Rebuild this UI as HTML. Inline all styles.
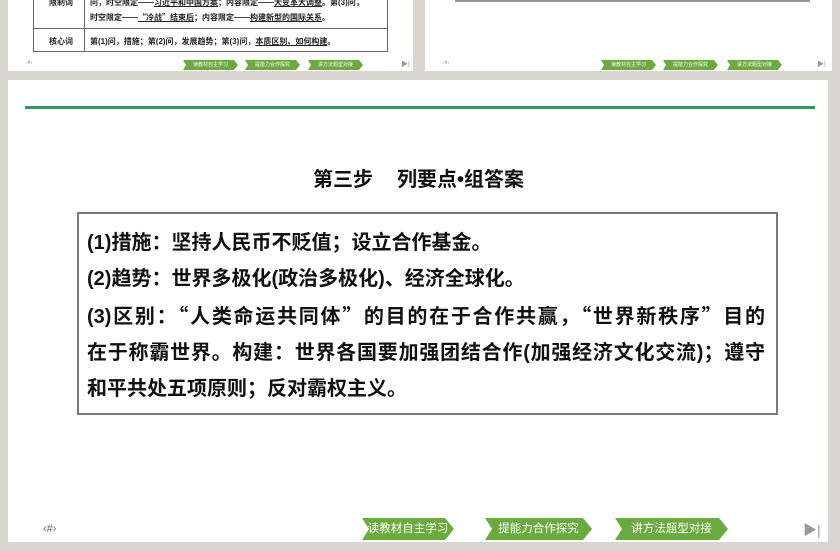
<!DOCTYPE html>
<html><head><meta charset="utf-8"><style>
*{margin:0;padding:0;box-sizing:border-box}
body{width:840px;height:551px;background:#d9d6d1;position:relative;overflow:hidden;font-family:"Liberation Sans","Noto Sans CJK SC",sans-serif}
.p{position:absolute;background:#fff}
.ab{position:absolute}
.btn{position:absolute;height:22px;background:#6aaa3e;color:#fff;font-size:11.5px;line-height:22px;text-align:center;padding-left:0;clip-path:polygon(0 0,calc(100% - 9px) 0,100% 50%,calc(100% - 9px) 100%,0 100%,7px 50%)}
.sbtn{position:absolute;height:10px;background:#6aaa3e;color:#fff;font-size:5px;line-height:10px;text-align:center;clip-path:polygon(0 0,calc(100% - 4px) 0,100% 50%,calc(100% - 4px) 100%,0 100%,3px 50%)}
.l{position:absolute;left:87px;font-size:20px;font-weight:bold;color:#111;white-space:nowrap;line-height:24px}
.j{width:678px;text-align:justify;text-align-last:justify;white-space:normal}
.q{font-family:"Noto Sans CJK SC",sans-serif}
.t{font-size:8px;color:#222;font-weight:bold;white-space:nowrap}
</style></head><body>
<div class="p" style="left:8px;top:0;width:405px;height:71px">
 <div class="ab" style="left:25px;top:-2px;width:355px;height:54px;border:1px solid #666;border-top:none"></div>
 <div class="ab" style="left:76px;top:0;width:1px;height:52px;background:#666"></div>
 <div class="ab" style="left:25px;top:28px;width:355px;height:1px;background:#666"></div>
 <div class="ab t" style="left:30px;top:-3px;width:46px;text-align:center">限制词</div>
 <div class="ab t" style="left:82px;top:-3px">问，时空限定——<u>习近平和中国方案</u>；内容限定——<u>大变革大调整</u>。第(3)问，</div>
 <div class="ab t" style="left:82px;top:12px">时空限定——<u><span class="q">“</span>冷战<span class="q">”</span>结束后</u>；内容限定——<u>构建新型的国际关系</u>。</div>
 <div class="ab t" style="left:30px;top:36px;width:46px;text-align:center">核心词</div>
 <div class="ab t" style="left:82px;top:36px">第(1)问，措施；第(2)问，发展趋势；第(3)问，<u>本质区别、如何构建</u>。</div>
 <div class="ab" style="left:18px;top:60px;font-size:5px;color:#888">‹#›</div>
 <div class="sbtn" style="left:175px;top:60px;width:55px">读教材自主学习</div>
 <div class="sbtn" style="left:237px;top:60px;width:55px">提能力合作探究</div>
 <div class="sbtn" style="left:300px;top:60px;width:55px">讲方法题型对接</div>
 <div class="ab" style="left:393px;top:59px;font-size:7px;color:#999">▶|</div>
</div>
<div class="p" style="left:425px;top:0;width:407px;height:71px">
 <div class="ab" style="left:30px;top:0;width:355px;height:2px;background:#999"></div>
 <div class="ab" style="left:18px;top:60px;font-size:5px;color:#888">‹#›</div>
 <div class="sbtn" style="left:176px;top:60px;width:55px">读教材自主学习</div>
 <div class="sbtn" style="left:238px;top:60px;width:55px">提能力合作探究</div>
 <div class="sbtn" style="left:302px;top:60px;width:55px">讲方法题型对接</div>
 <div class="ab" style="left:392px;top:59px;font-size:7px;color:#999">▶|</div>
</div>
<div class="p" style="left:8px;top:80px;width:820px;height:462px"></div>
<div class="ab" style="left:25px;top:106px;width:790px;height:3px;background:#2f9a5c"></div>
<div class="ab" style="left:313px;top:168px;font-size:20px;font-weight:bold;color:#111;white-space:nowrap;line-height:24px">第三步<span style="display:inline-block;width:24px"></span>列要点•组答案</div>
<div class="ab" style="left:77px;top:212px;width:701px;height:203px;border:2px solid #7a7a7a"></div>
<div class="l" style="top:231px">(1)措施：坚持人民币不贬值；设立合作基金。</div>
<div class="l" style="top:267px">(2)趋势：世界多极化(政治多极化)、经济全球化。</div>
<div class="l j" style="top:303px">(3)区别：<span class="q">“</span>人类命运共同体<span class="q">”</span>的目的在于合作共赢，<span class="q">“</span>世界新秩序<span class="q">”</span>目的</div>
<div class="l j" style="top:341px">在于称霸世界。构建：世界各国要加强团结合作(加强经济文化交流)；遵守</div>
<div class="l" style="top:377px">和平共处五项原则；反对霸权主义。</div>
<div class="ab" style="left:43px;top:523px;font-size:11px;color:#666">‹#›</div>
<div class="btn" style="left:362px;top:518px;width:92px">读教材自主学习</div>
<div class="btn" style="left:485px;top:518px;width:107px">提能力合作探究</div>
<div class="btn" style="left:615px;top:518px;width:113px">讲方法题型对接</div>
<div class="ab" style="left:803px;top:520px;font-size:14px;color:#999">▶|</div>
</body></html>
